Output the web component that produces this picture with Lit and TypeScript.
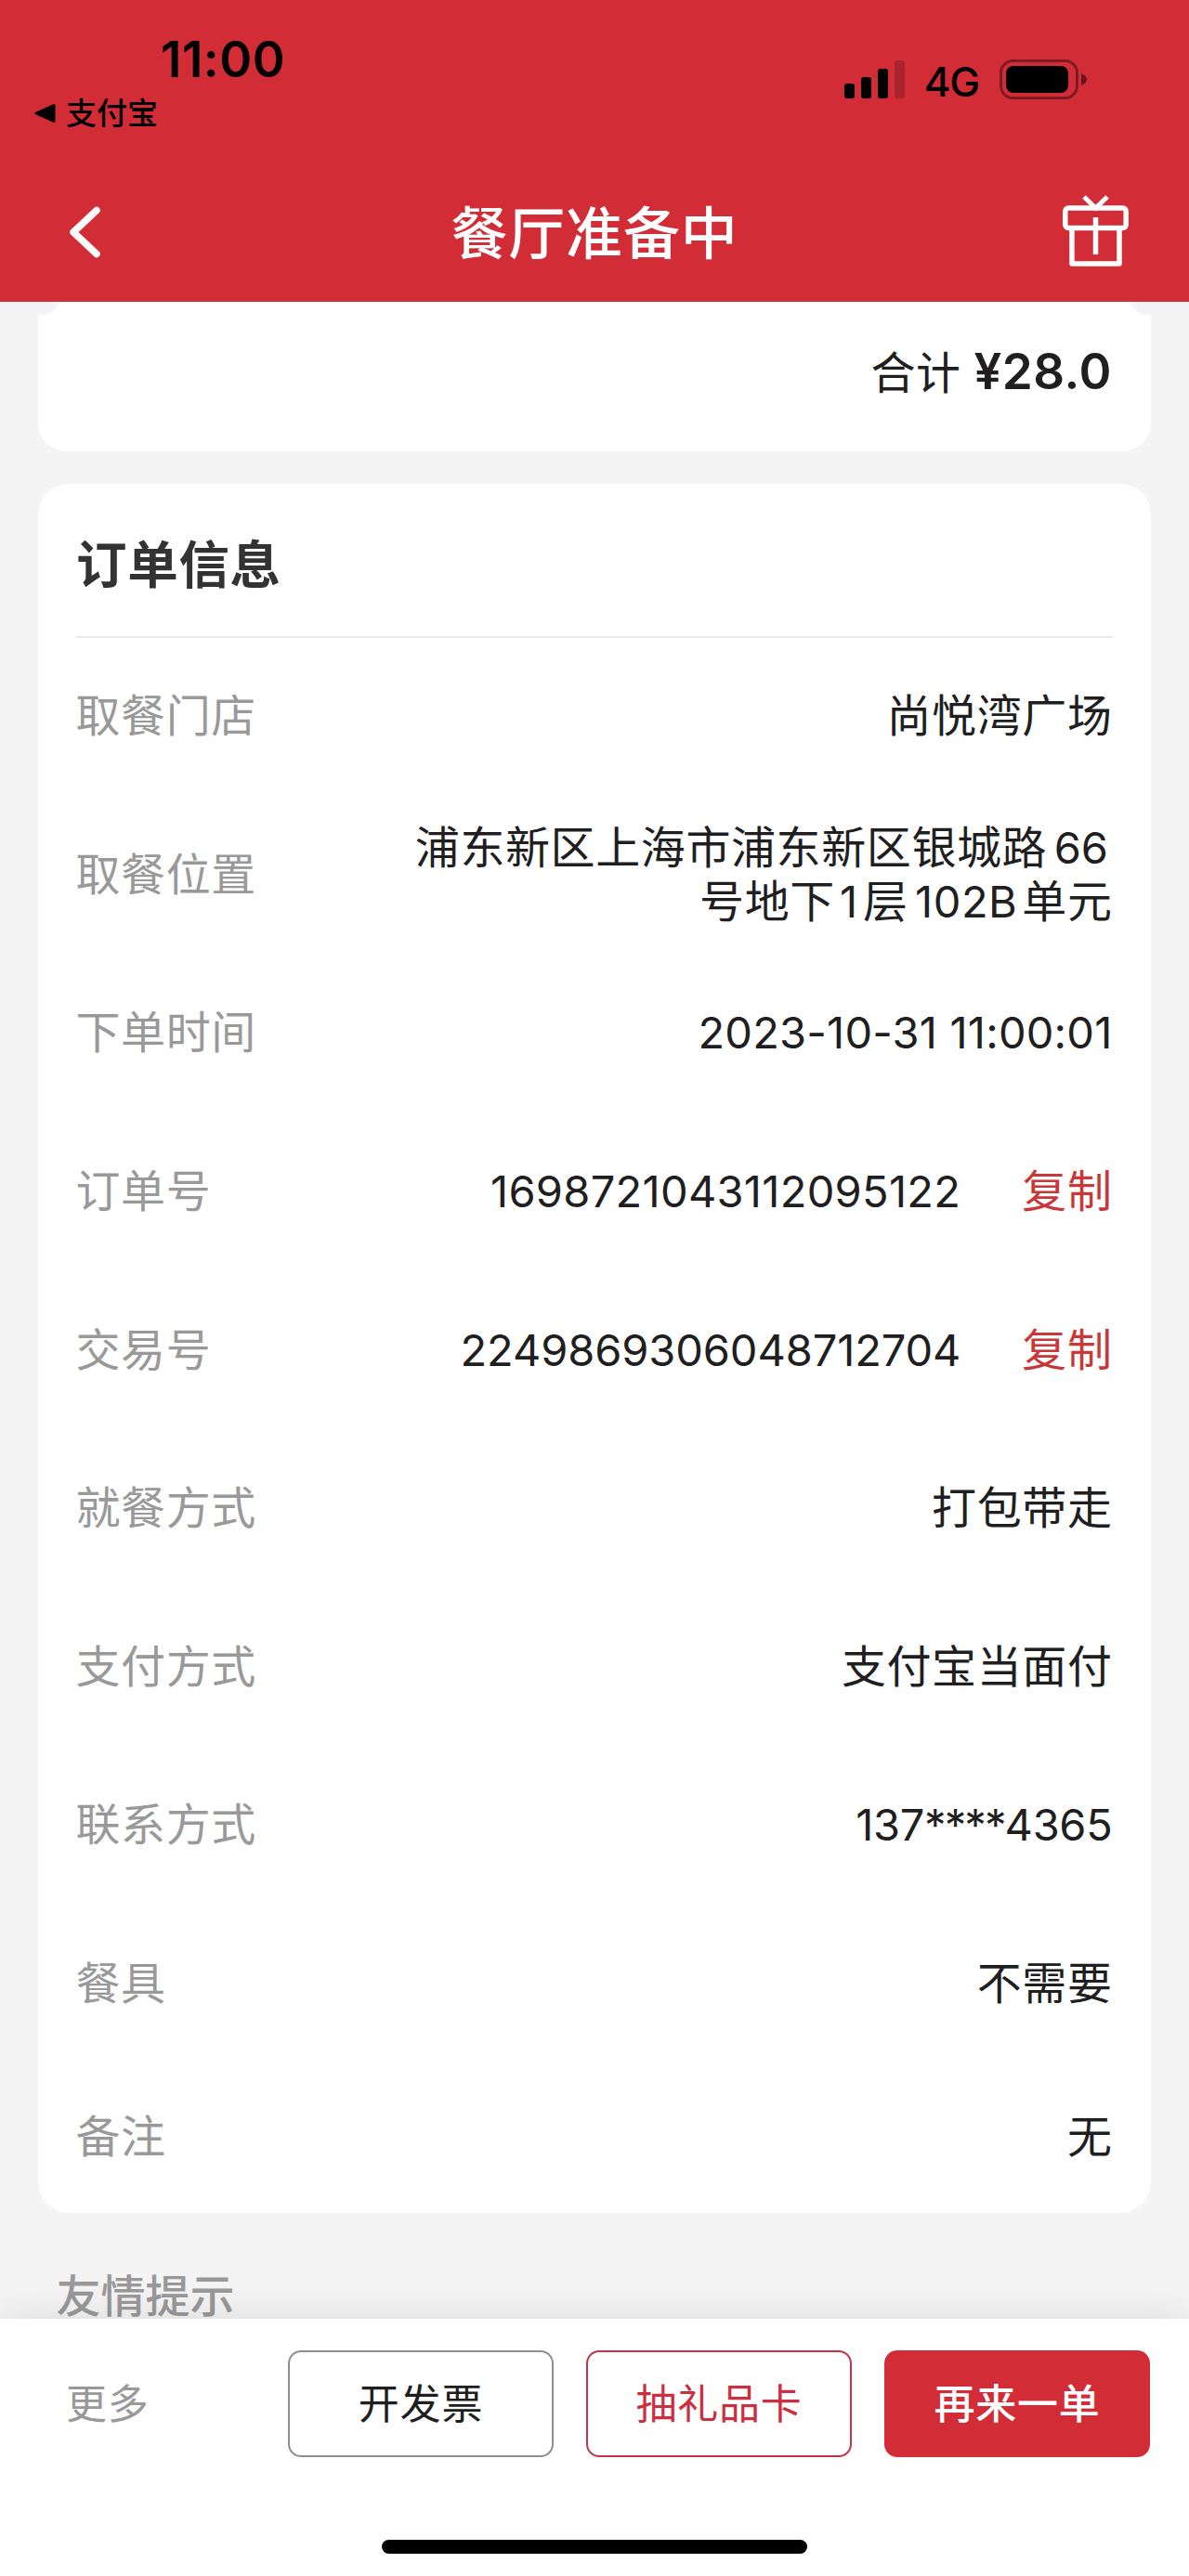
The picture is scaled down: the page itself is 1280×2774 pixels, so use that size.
import { LitElement, html, css, svg } from "lit";
import { customElement } from "lit/decorators.js";

interface Row {
  label: string;
  value: unknown;
  copy?: boolean;
  cls?: string;
}

const n = (t: unknown, cls = "") => html`<span class="num ${cls}">${t}</span>`;

const ROWS: Row[] = [
  { label: "取餐门店", value: "尚悦湾广场" },
  {
    label: "取餐位置",
    value: html`<span class="line">浦东新区上海市浦东新区银城路${n("66", "tail")}</span><span class="line">号地下${n("1", "one")}层${n("102B", "unit")}单元</span>`,
  },
  { label: "下单时间", value: n("2023-10-31 11:00:01", "date") },
  { label: "订单号", value: n("1698721043112095122", "order"), copy: true },
  { label: "交易号", value: n("2249869306048712704", "trade"), copy: true },
  { label: "就餐方式", value: "打包带走" },
  { label: "支付方式", value: "支付宝当面付" },
  { label: "联系方式", value: n(html`137<span class="stars">****</span>4365`, "phone") },
  { label: "餐具", value: "不需要" },
  { label: "备注", value: "无", cls: "last" },
];

@customElement("app-root")
export class AppRoot extends LitElement {
  static styles = css`
    :host {
      display: flex;
      flex-direction: column;
      width: 1280px;
      height: 2774px;
      overflow: hidden;
      background: #f4f4f4;
      color: #201e1f;
      font-family: Inter, "Noto Sans CJK SC", sans-serif;
      font-size: 48px;
      line-height: 58px;
    }
    * { box-sizing: border-box; }
    svg { display: block; flex: none; }
    .header {
      flex: none;
      height: 325px;
      background: #d22c37;
      color: #000;
    }
    .status {
      height: 175px;
      display: flex;
      justify-content: space-between;
      padding: 35px 109px 0 37px;
    }
    .clock {
      display: block;
      margin-left: 136px;
      font-size: 53px;
      font-weight: 600;
      letter-spacing: 0.5px;
    }
    .back-app {
      display: flex;
      align-items: center;
      gap: 11px;
      font-size: 33px;
      font-weight: 500;
    }
    .signal { display: flex; align-items: flex-start; padding-top: 24px; }
    .net { font-size: 44px; font-weight: 500; margin: 0 22px 0 20px; letter-spacing: -1.2px; }
    .nav {
      height: 150px;
      display: grid;
      grid-template-columns: 1fr auto 1fr;
      align-items: center;
      padding: 0 63px;
      color: #fff;
    }
    .back { margin-left: 9px; }
    .nav h1 {
      margin: 0;
      padding-top: 3px;
      font-size: 61px;
      font-weight: 500;
      letter-spacing: 0.8px;
      line-height: 90px;
    }
    .gift { justify-self: end; }
    .content { flex: none; height: 2172px; padding: 0 41px; }
    .total {
      height: 161px;
      margin-bottom: 35px;
      display: flex;
      justify-content: flex-end;
      align-items: center;
      padding: 0 42px 8px;
      border-radius: 0 0 30px 30px;
      letter-spacing: 0.5px;
      background:
        radial-gradient(circle at 3px -7px, #f4f4f4 20.5px, transparent 21.5px),
        radial-gradient(circle at 1195px -7px, #f4f4f4 20.5px, transparent 21.5px),
        #fff;
    }
    .total .price { font-weight: 600; font-size: 53px; margin: 0 0 4px 14px; letter-spacing: 0.5px; }
    .info {
      height: 1862px;
      border-radius: 33px;
      background: #fff;
      padding: 0 41px;
    }
    .info h2 {
      margin: 0;
      height: 166px;
      padding-top: 9px;
      line-height: 156px;
      font-size: 54.5px;
      font-weight: 600;
      letter-spacing: 0.7px;
      color: #333;
      border-bottom: 2px solid #e8e8e8;
    }
    .row {
      height: 170.6px;
      padding-bottom: 2px;
      display: flex;
      align-items: center;
      justify-content: space-between;
      letter-spacing: 0.6px;
    }
    .row.last { height: 160px; }
    .label { color: #999; margin-left: -0.5px; }
    .value {
      text-align: right;
      display: flex;
      align-items: center;
      justify-content: flex-end;
      padding-right: 0.5px;
    }
    .line { display: block; white-space: nowrap; }
    .num { font-size: 47px; letter-spacing: 0; }
    .tail { margin: 0 4.5px 0 7.5px; }
    .one { margin: 0 6px 0 5px; }
    .unit { margin: 0 5px 0 7.5px; letter-spacing: 0.5px; }
    .date { letter-spacing: 0.2px; }
    .order { letter-spacing: 0.3px; }
    .trade { letter-spacing: -0.1px; }
    .phone { letter-spacing: -0.3px; }
    .stars { letter-spacing: -1.9px; }
    .copy { color: #c93838; margin-left: 66px; }
    .tip { margin: 67px 0 0 19.5px; line-height: 46px; color: #999; font-weight: 500; }
    .bar {
      flex: none;
      height: 277px;
      background: #fff;
      box-shadow: 0 0 40px rgba(0, 0, 0, 0.11);
      padding: 34px 42px 0 72px;
      display: flex;
      flex-direction: column;
      align-items: stretch;
    }
    .actions { display: flex; height: 115px; align-items: center; gap: 35px; font-size: 44px; letter-spacing: 0.8px; }
    .more { flex: 1; color: #999; margin-left: -1px; }
    .btn {
      width: 286px;
      height: 115px;
      border-radius: 14px;
      border: 2px solid #8f8f8f;
      display: flex;
      align-items: center;
      justify-content: center;
    }
    .btn.red { border-color: #c23548; color: #cb2f40; }
    .btn.fill { border-color: #d22c37; background: #d22c37; color: #fff; font-weight: 500; }
    .home { width: 458px; height: 15px; border-radius: 8px; background: #000; margin: 89px 0 0 339px; }
  `;

  render() {
    return html`
      <header class="header">
        <div class="status">
          <div>
            <span class="clock">11:00</span>
            <div class="back-app">
              <svg width="23" height="20" viewBox="0 0 23 20"><path d="M2 10 L21 1.500 V18.500Z" stroke="#000" stroke-width="3" stroke-linejoin="round" /></svg>
              <span>支付宝</span>
            </div>
          </div>
          <div class="signal">
            <svg width="66" height="48" viewBox="0 0 66 48">
              ${[[0, 31], [18, 24], [36, 15]].map(([x, y]) => svg`<rect x=${x} y=${y} width="11" height=${47 - y} rx="3" />`)}
              <rect x="54" y="6" width="11" height="41" rx="3" opacity=".2" />
            </svg>
            <span class="net">4G</span>
            <svg width="95" height="50" viewBox="0 0 95 50">
              <rect x="1.500" y="6.500" width="82" height="40" rx="13" fill="none" stroke="#000" stroke-opacity=".4" stroke-width="3" />
              <rect x="7" y="12" width="67" height="29" rx="8" />
              <path d="M88 20 C92 22 94 24 94 26.500 C94 29 92 31 88 33Z" opacity=".5" />
            </svg>
          </div>
        </div>
        <div class="nav">
          <svg class="back" width="40" height="60" viewBox="0 0 40 60"><path d="M32 6.500 L7 30 L32 53.500" fill="none" stroke="#fff" stroke-width="7.500" stroke-linecap="round" stroke-linejoin="round" /></svg>
          <h1>餐厅准备中</h1>
          <svg class="gift" width="75" height="80" viewBox="0 0 75 80" fill="none" stroke="#fff" stroke-width="5.500">
            <rect x="4.800" y="14" width="65.400" height="21.500" rx="3.500" />
            <path d="M12 36 V74 H63 V36" stroke-linejoin="round" />
            <path d="M37.500 24 V64" />
            <path d="M25 2 L37.500 14 L50 2" stroke-width="5" />
          </svg>
        </div>
      </header>
      <main class="content">
        <section class="total"><span>合计</span><span class="price">¥28.0</span></section>
        <section class="info">
          <h2>订单信息</h2>
          ${ROWS.map(
            (r) => html`<div class="row ${r.cls ?? ""}">
              <span class="label">${r.label}</span>
              <span class="value"><span>${r.value}</span>${r.copy ? html`<span class="copy">复制</span>` : ""}</span>
            </div>`
          )}
        </section>
        <p class="tip">友情提示</p>
      </main>
      <footer class="bar">
        <div class="actions">
          <span class="more">更多</span>
          <span class="btn">开发票</span>
          <span class="btn red">抽礼品卡</span>
          <span class="btn fill">再来一单</span>
        </div>
        <div class="home"></div>
      </footer>
    `;
  }
}
